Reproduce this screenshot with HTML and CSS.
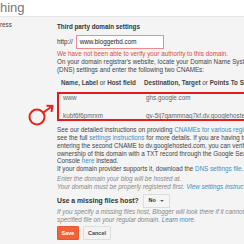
FILE: index.html
```html
<!DOCTYPE html>
<html lang="en">

<head>
    <meta charset="UTF-8">
    <meta name="viewport" content="width=device-width, initial-scale=1.0">
    <title>Publishing</title>
    <link rel="stylesheet" href="styles.css">
</head>

<body>
    <div class="topBar">hing</div>

    <div class="page">
        <div class="label">ress</div>

        <div class="content">
            <h3 class="title">Third party domain settings</h3>

            <div class="urlRow">
                <span class="proto">http://</span>
                <span class="urlInput">www.bloggerbd.com</span>
            </div>
            <p class="error">We have not been able to verify your authority to this domain.</p>

            <p class="text">On your domain registrar's website, locate your Domain Name System<br>(DNS) settings and enter the following two CNAMEs:</p>

            <div class="cnames">
                <div class="row head">
                    <span>Name, Label <b class="soft">or</b> Host field</span>
                    <span>Destination, Target <b class="soft">or</b> Points To Server</span>
                </div>
                <div class="box">
                    <div class="row">
                        <span>www</span>
                        <span>ghs.google.com</span>
                    </div>
                    <div class="row">
                        <span>kubf6f6pmrxm</span>
                        <span>gv-5ij7gammnaq7kf.dv.googlehosted.com</span>
                    </div>
                </div>
            </div>

            <p class="text more">See our detailed instructions on providing <a href="#">CNAMEs for various registrars</a>, or<br>see the full <a href="#">settings instructions</a> for more details. If you are having trouble<br>entering the second CNAME to dv.googlehosted.com, you can verify<br>ownership of this domain with a TXT record through the Google Search<br>Console <a href="#">here</a> instead.<br>If your domain provider supports it, download the <a href="#">DNS settings file</a>.</p>

            <p class="hint">Enter the domain your blog will be hosted at.<br>Your domain must be properly registered first. <a href="#">View settings instructions</a>.</p>

            <div class="hostRow">
                <span class="question">Use a missing files host?</span>
                <span class="select">No <i class="caret"></i></span>
            </div>
            <p class="hint tight">If you specify a missing files host, Blogger will look there if it cannot find a<br>specified file on your regular domain. <a href="#">Learn more.</a></p>

            <div class="buttons">
                <button class="btn save">Save</button>
                <button class="btn cancel">Cancel</button>
            </div>
        </div>

        <!-- 标注箭头 -->
        <svg class="mark" width="30" height="30" viewBox="0 0 30 30">
            <circle cx="10" cy="18" r="7.5" fill="none" stroke="#e8231c" stroke-width="2" />
            <path d="M16 13.7 L25.5 7 M19.5 6.8 L25.5 7 L24.5 12.8" fill="none" stroke="#e8231c" stroke-width="2" />
        </svg>
    </div>
</body>

</html>
```

FILE: styles.css
```css
* {
    margin: 0;
    padding: 0;
    box-sizing: border-box;
}

html,
body {
    height: 100%;
    overflow: hidden;
}

body {
    font-family: "Liberation Sans", Arial, sans-serif;
    font-size: 6.3px;
    line-height: 7.7px;
    color: #333;
    background: #f4f4f4;
}

a {
    color: #3b8fc4;
    text-decoration: none;
}

.topBar {
    height: 17px;
    background: #fff;
    border-bottom: 1px solid #e6e6e6;
    font-size: 13px;
    line-height: 16px;
    color: #777;
}

.page {
    position: relative;
    display: flex;
    padding-top: 4px;
}

.label {
    width: 57px;
    flex: none;
    color: #444;
}

.content {
    width: 300px;
    flex: none;
    white-space: nowrap;
}

.title {
    font-size: 6.3px;
    font-weight: bold;
    line-height: 7.7px;
    padding-top: 1.5px;
    margin-bottom: 5px;
}

.urlRow {
    display: flex;
    align-items: center;
    gap: 3px;
}

.urlInput {
    width: 88px;
    height: 14px;
    padding-left: 3px;
    line-height: 12px;
    background: #fff;
    border: 1px solid #ee8a8a;
    color: #222;
}

.error {
    color: #dd4b39;
    margin-top: 0.5px;
}

.text {
    margin-top: 0.5px;
    color: #444;
}

.cnames {
    margin-top: 6px;
}

.row {
    display: flex;
    padding-left: 4px;
}

.row span:first-child {
    width: 83px;
}

.head {
    font-weight: bold;
    color: #444;
    padding-bottom: 5px;
}

.soft {
    font-weight: normal;
}

.box {
    display: flex;
    flex-direction: column;
    gap: 10px;
    border: 2px solid #e21b1b;
    border-right: none;
    color: #666;
}

.text.more {
    margin-top: 5px;
}

.hint {
    margin-top: 2.5px;
    font-style: italic;
    color: #888;
}

.hint.tight {
    margin-top: 0;
}

.hostRow {
    display: flex;
    align-items: center;
    gap: 4px;
    margin-top: 3.5px;
}

.question {
    font-size: 6.8px;
    font-weight: bold;
    color: #333;
}

.select {
    display: flex;
    align-items: center;
    gap: 4px;
    height: 14px;
    padding: 0 5px;
    border: 1px solid #ddd;
    background: #f5f5f5;
    font-size: 5.5px;
    font-weight: bold;
}

.caret {
    border: 2px solid transparent;
    border-top: 2px solid #666;
    margin-top: 2px;
}

.buttons {
    display: flex;
    gap: 4px;
    margin-top: 3px;
}

.btn {
    height: 14px;
    font-family: inherit;
    font-size: 5.5px;
    font-weight: bold;
    border: 1px solid #ddd;
    background: #f3f3f3;
    color: #444;
    border-radius: 1px;
}

.save {
    width: 22px;
    background: #f26138;
    border-color: #e8562e;
    color: #fff;
}

.cancel {
    width: 28px;
}

/* 红色圈标注 */
.mark {
    position: absolute;
    left: 26.5px;
    top: 82px;
}
```
